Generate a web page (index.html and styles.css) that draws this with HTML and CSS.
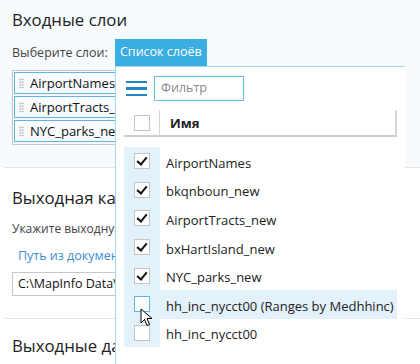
FILE: index.html
```html
<!DOCTYPE html>
<html lang="ru">
<head>
    <meta charset="UTF-8">
    <title>Слои</title>
    <link rel="stylesheet" href="styles.css">
</head>
<body>
    <div class="panel">
        <div class="sec sec-active">
            <h2 class="sec-title">Входные слои</h2>
            <div class="pick-row">
                <span class="pick-label">Выберите слои:</span>
                <span class="tab">Список слоёв</span>
            </div>
            <div class="layer-box">
                <div class="layer-item"><span class="grip"></span>AirportNames_layer</div>
                <div class="layer-item"><span class="grip"></span>AirportTracts_new</div>
                <div class="layer-item"><span class="grip"></span>NYC_parks_new</div>
            </div>
        </div>
        <div class="sep"></div>
        <div class="sec sec-output">
            <h2 class="sec-title">Выходная карта</h2>
            <div class="hint">Укажите выходную папку</div>
            <a class="link">Путь из документа</a>
            <div class="path-box">C:\MapInfo Data\Output</div>
        </div>
        <div class="sep"></div>
        <div class="sec sec-last">
            <h2 class="sec-title">Выходные данные</h2>
        </div>
    </div>

    <div class="popup">
        <div class="tools">
            <span class="burger"><i></i><i></i><i></i></span>
            <div class="filter">Фильтр</div>
        </div>
        <div class="grid-head">
            <span class="cell-check"><span class="box"></span></span>
            <span class="head-name">Имя</span>
        </div>
        <div class="rows">
            <div class="row"><span class="cell-check"><span class="box checked"></span></span><span class="name">AirportNames</span></div>
            <div class="row"><span class="cell-check"><span class="box checked"></span></span><span class="name">bkqnboun_new</span></div>
            <div class="row"><span class="cell-check"><span class="box checked"></span></span><span class="name">AirportTracts_new</span></div>
            <div class="row"><span class="cell-check"><span class="box checked"></span></span><span class="name">bxHartIsland_new</span></div>
            <div class="row"><span class="cell-check"><span class="box checked"></span></span><span class="name">NYC_parks_new</span></div>
            <div class="row row-hover"><span class="cell-check"><span class="box box-hover"></span></span><span class="name">hh_inc_nycct00 (Ranges by Medhhinc)</span></div>
            <div class="row"><span class="cell-check"><span class="box"></span></span><span class="name">hh_inc_nycct00</span></div>
        </div>
        <svg class="cursor" width="14" height="20" viewBox="0 0 14 20">
            <path d="M1 1 L1 15 L4.5 11.5 L7 17.5 L9.5 16.5 L7 10.5 L12 10.5 Z" fill="#fff" stroke="#000" stroke-width="1" stroke-linejoin="round"/>
        </svg>
    </div>
</body>
</html>
```

FILE: styles.css
```css
body {
    margin: 0;
    width: 420px;
    height: 364px;
    overflow: hidden;
    background-color: #ffffff;
    font-family: 'Open Sans', 'Noto Sans', sans-serif;
    color: #333;
    position: relative;
}

.panel {
    width: 420px;
}

.sec {
    padding: 0 12px;
    overflow: hidden;
    white-space: nowrap;
}

.sec-active {
    background-color: #f7fbfe;
    padding-top: 8px;
    padding-bottom: 22px;
}

.sec-title {
    margin: 0;
    font-size: 16.8px;
    font-weight: normal;
    color: #222;
    line-height: 24px;
}

.sep {
    margin-left: 4px;
    height: 1px;
    background-color: #e4e4e4;
}

.pick-row {
    display: flex;
    align-items: center;
    margin-top: 7px;
    font-size: 12.5px;
}

.pick-label {
    color: #444;
    width: 103px;
}

.tab {
    background-color: #3aaee0;
    color: #fff;
    padding: 0 5px;
    height: 27px;
    line-height: 26px;
    font-size: 12.5px;
}

.layer-box {
    margin-top: 4px;
    border: 1px solid #c8c8c8;
    padding: 0 1px;
    width: 330px;
}

.layer-item {
    display: flex;
    align-items: center;
    border: 1px solid #5fb6e3;
    height: 20px;
    margin: 1px 0 2px;
    font-size: 13px;
    color: #111;
}

.grip {
    width: 5px;
    height: 11px;
    margin: 0 6px 0 4px;
    background-image: radial-gradient(circle, #bbb 0.8px, transparent 1px);
    background-size: 2.5px 2.75px;
}

.sec-output {
    padding-top: 18px;
    padding-bottom: 22px;
}

.hint {
    margin-top: 11px;
    font-size: 12px;
    line-height: 16px;
    color: #444;
}

.link {
    display: block;
    margin: 11px 0 0 6px;
    font-size: 12.5px;
    line-height: 16px;
    color: #3b8fd6;
}

.path-box {
    margin-top: 8px;
    height: 22px;
    border: 1px solid #c8c8c8;
    padding-left: 5px;
    line-height: 22px;
    font-size: 12.5px;
    color: #111;
    width: 330px;
}

.sec-last {
    padding-top: 15px;
}

/* всплывающий список слоёв */
.popup {
    position: absolute;
    left: 115px;
    top: 66px;
    width: 290px;
    height: 310px;
    background-color: #fff;
    border-top: 1px solid #a3d6ef;
    border-left: 1px solid #a3d6ef;
    padding: 9px 8px 0 8px;
    box-sizing: border-box;
}

.tools {
    display: flex;
    align-items: center;
    height: 25px;
}

.burger {
    display: flex;
    flex-direction: column;
    gap: 4px;
    width: 21px;
    margin: 0 7px 0 2px;
}

.burger i {
    display: block;
    height: 2.5px;
    background-color: #2287c0;
}

.filter {
    width: 90px;
    height: 25px;
    box-sizing: border-box;
    border: 1px solid #6cbfe8;
    padding-left: 6px;
    line-height: 22px;
    font-size: 12.5px;
    color: #8a8a8a;
}

.grid-head {
    display: flex;
    align-items: center;
    margin-top: 9px;
    height: 27px;
    width: 273px;
    box-sizing: border-box;
    border-right: 2px solid #d6d6d6;
    border-bottom: 2px solid #cfcfcf;
}

.cell-check {
    width: 36px;
    height: 100%;
    display: flex;
    align-items: center;
    justify-content: center;
    flex-shrink: 0;
}

.grid-head .cell-check {
    border-right: 1px solid #d6d6d6;
    box-sizing: border-box;
}

.head-name {
    padding-left: 10px;
    font-size: 13px;
    font-weight: bold;
    color: #222;
}

.rows {
    margin-top: 10px;
    width: 273px;
}

.row {
    display: flex;
    align-items: center;
    height: 28.6px;
}

.row .cell-check {
    background-color: #e3f1fa;
}

.row-hover {
    background-color: #e3f1fa;
}

.box {
    width: 16px;
    height: 16px;
    box-sizing: border-box;
    border: 1px solid #c4c4c4;
    background-color: #fff;
    position: relative;
}

.box.checked::after {
    content: "";
    position: absolute;
    left: 4px;
    top: 1px;
    width: 4px;
    height: 8px;
    border-right: 2.5px solid #111;
    border-bottom: 2.5px solid #111;
    transform: rotate(40deg);
}

.box-hover {
    border-color: #5ab8e8;
}

.name {
    padding: 3px 0 0 6px;
    font-size: 13px;
    color: #222;
    white-space: nowrap;
}

.cursor {
    position: absolute;
    left: 24px;
    top: 241px;
}
```
